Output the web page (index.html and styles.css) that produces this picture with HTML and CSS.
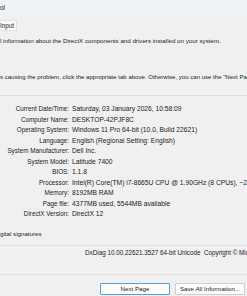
FILE: index.html
```html
<!DOCTYPE html>
<html>
<head>
<meta charset="utf-8">
<link rel="stylesheet" href="styles.css">
</head>
<body>
<div class="window">
  <div class="titlebar"><span class="title">ol</span></div>
  <div class="tabs"><div class="tab">Input</div></div>
  <div class="page">
    <p class="intro">l information about the DirectX components and drivers installed on your system.</p>
    <p class="intro second">s causing the problem, click the appropriate tab above. Otherwise, you can use the "Next Page" button below to visit each page in sequence.</p>
    <div class="info">
      <span class="lbl">Current Date/Time:</span><span class="val">Saturday, 03 January 2026, 10:58:09</span>
      <span class="lbl">Computer Name:</span><span class="val">DESKTOP-42PJF8C</span>
      <span class="lbl">Operating System:</span><span class="val">Windows 11 Pro 64-bit (10.0, Build 22621)</span>
      <span class="lbl">Language:</span><span class="val">English (Regional Setting: English)</span>
      <span class="lbl">System Manufacturer:</span><span class="val">Dell Inc.</span>
      <span class="lbl">System Model:</span><span class="val">Latitude 7400</span>
      <span class="lbl">BIOS:</span><span class="val">1.1.8</span>
      <span class="lbl">Processor:</span><span class="val">Intel(R) Core(TM) i7-8665U CPU @ 1.90GHz (8 CPUs), ~2.1GHz</span>
      <span class="lbl">Memory:</span><span class="val">8192MB RAM</span>
      <span class="lbl">Page file:</span><span class="val">4377MB used, 5544MB available</span>
      <span class="lbl">DirectX Version:</span><span class="val">DirectX 12</span>
    </div>
    <p class="check">gital signatures</p>
  </div>
  <div class="footer">
    <p class="version">DxDiag 10.00.22621.3527 64-bit Unicode&nbsp; Copyright © Microsoft. All rights reserved.</p>
    <div class="buttons">
      <button class="btn default">Next Page</button>
      <button class="btn">Save All Information...</button>
    </div>
  </div>
</div>
</body>
</html>
```
FILE: styles.css
```css
html, body {
  margin: 0;
  padding: 0;
}
body {
  width: 247px;
  height: 296px;
  overflow: hidden;
  background: #f0f0f0;
  font-family: "Liberation Sans", Arial, sans-serif;
  font-size: 6.7px;
  color: #1b1b1b;
}
p {
  margin: 0;
}
.window {
  display: block;
  white-space: nowrap;
}
.titlebar {
  height: 14px;
  background: #eef3f8;
  display: flex;
  align-items: center;
}
.title {
  font-size: 6.5px;
  padding-top: 1px;
}
.tabs {
  display: flex;
  padding-top: 6px;
  height: 11px;
}
.tab {
  font-size: 6.3px;
  background: #f9f9f9;
  border: 1px solid #e2e2e2;
  border-left: none;
  padding: 0 2px 0 0;
  line-height: 9px;
}
.intro {
  font-size: 6.2px;
  line-height: 10px;
  padding-top: 5px;
}
.intro.second {
  font-size: 6.05px;
  padding-top: 26px;
}
.info {
  display: grid;
  grid-template-columns: 69px auto;
  column-gap: 3px;
  margin-top: 13px;
  border-top: 1px solid #e0e0e0;
  padding-top: 8px;
  line-height: 10.5px;
}
.lbl {
  font-size: 6.3px;
  text-align: right;
}
.check {
  font-size: 6.2px;
  padding-top: 9px;
  line-height: 10px;
}
.footer {
  margin-top: 6px;
  border-top: 1px solid #e0e0e0;
}
.version {
  font-size: 6.3px;
  padding: 2px 0 0 85px;
  line-height: 10px;
}
.buttons {
  display: flex;
  gap: 5px;
  margin-top: 16px;
  border-top: 1px solid #e0e0e0;
  padding: 8px 0 0 100px;
}
.btn {
  width: 70px;
  height: 12px;
  padding: 0;
  margin: 0;
  font-family: inherit;
  font-size: 6.2px;
  color: #1b1b1b;
  background: #fdfdfd;
  border: 1px solid #d0d0d0;
  border-radius: 1px;
}
.btn.default {
  border-color: #5aa0e0;
}
```
